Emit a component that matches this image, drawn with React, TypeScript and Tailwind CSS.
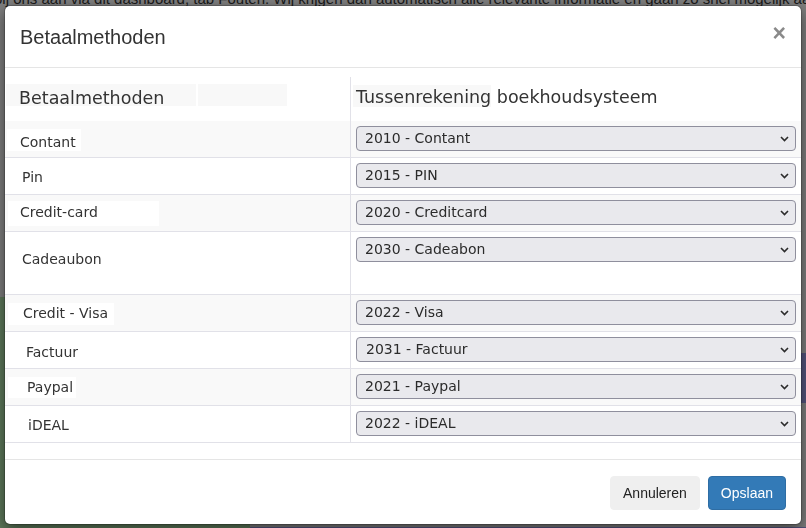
import React from 'react';

type Row = {
  name: string;
  account: string;
  striped: boolean;
  height: string;
  cell: string;
  label: string;
  select: string;
};

// label offsets/patches follow the original page (labels had white backgrounds pasted behind them)
const rows: Row[] = [
  {
    name: 'Contant',
    account: '2010 - Contant',
    striped: true,
    height: 'h-[37px]',
    cell: 'pt-[8px] pl-[2px]',
    label: 'w-[74px] h-[22px] bg-white pl-[13px] leading-[27px]',
    select: 'pl-[8px]',
  },
  {
    name: 'Pin',
    account: '2015 - PIN',
    striped: false,
    height: 'h-[37px]',
    cell: 'pt-[9px]',
    label: 'pl-[17px] leading-[20px]',
    select: 'pl-[8px]',
  },
  {
    name: 'Credit-card',
    account: '2020 - Creditcard',
    striped: true,
    height: 'h-[37px]',
    cell: 'pt-[6px] pl-[3px]',
    label: 'w-[151px] h-[25px] bg-white pl-[12px] leading-[22px]',
    select: 'pl-[8px]',
  },
  {
    name: 'Cadeaubon',
    account: '2030 - Cadeabon',
    striped: false,
    height: 'h-[63px]',
    cell: 'pt-[17px]',
    label: 'pl-[17px] leading-[20px]',
    select: 'pl-[8px]',
  },
  {
    name: 'Credit - Visa',
    account: '2022 - Visa',
    striped: true,
    height: 'h-[37px]',
    cell: 'pt-[8px] pl-[3px]',
    label: 'w-[106px] h-[22px] bg-white pl-[15px] leading-[21px]',
    select: 'pl-[8px]',
  },
  {
    name: 'Factuur',
    account: '2031 - Factuur',
    striped: false,
    height: 'h-[37px]',
    cell: 'pt-[10px]',
    label: 'pl-[21px] leading-[20px]',
    select: 'pl-[9px]',
  },
  {
    name: 'Paypal',
    account: '2021 - Paypal',
    striped: true,
    height: 'h-[37px]',
    cell: 'pt-[8px] pl-[3px]',
    label: 'w-[68px] h-[21px] bg-white pl-[19px] leading-[20px]',
    select: 'pl-[8px]',
  },
  {
    name: 'iDEAL',
    account: '2022 - iDEAL',
    striped: false,
    height: 'h-[37px]',
    cell: 'pt-[9px]',
    label: 'pl-[23px] leading-[20px]',
    select: 'pl-[8px]',
  },
];

const Chevron = () => (
  <svg width="9" height="6" viewBox="0 0 9 6" className="pointer-events-none absolute right-[7px] top-1/2 -translate-y-1/2">
    <polyline points="1,1 4.5,4.5 8,1" fill="none" stroke="#2b2b2b" strokeWidth="1.6" />
  </svg>
);

const AccountSelect: React.FC<{ value: string; pad: string }> = ({ value, pad }) => (
  <div className="relative ml-[5px] mt-[5px] w-[440px]">
    <select
      defaultValue={value}
      className={`block h-[25px] w-full appearance-none rounded-[4px] border border-[#8f8f9d] bg-[#e9e9ed] ${pad} pr-6 text-[14px] leading-[23px] text-[#2b2b2b]`}
    >
      <option>{value}</option>
    </select>
    <Chevron />
  </div>
);

const App: React.FC = () => {
  return (
    <div className="relative h-[528px] w-[806px] overflow-hidden bg-[#808080] font-['Liberation_Sans',Arial,sans-serif] text-[#1a1a1a]">
      {/* page behind the dialog */}
      <p className="-ml-[6px] -mt-[10px] whitespace-nowrap text-[15px] leading-[18px]">
        bij ons aan via dit dashboard, tab Fouten. Wij krijgen dan automatisch alle relevante informatie en gaan zo snel mogelijk aan de slag.
      </p>
      <div className="mt-[289px] flex h-[240px]">
        <div className="w-[250px] bg-[#5f7b5c]" />
        <div className="flex flex-1 flex-col">
          <div className="ml-auto mt-[56px] h-[50px] w-[60px] bg-[#55557f]" />
          <div className="flex-1" />
          <div className="h-[10px] bg-[#55557f]" />
        </div>
      </div>

      {/* dialog */}
      <div className="fixed inset-0 pl-[4px] pt-[5px]">
        <div className="flex h-[520px] w-[798px] flex-col rounded-[6px] border border-black/20 bg-white bg-clip-padding shadow-[0_5px_15px_rgba(0,0,0,0.5)]">
          <div className="flex items-start justify-between border-b border-[#e5e5e5] px-[15px]">
            <h4 className="pb-[16px] pt-[17px] text-[20px] leading-[28px] text-[#333]">Betaalmethoden</h4>
            <button className="mt-[16px] text-[23px] font-bold leading-none text-[#8a8a8a]">×</button>
          </div>

          <div className="pb-[16px] pt-[9px] font-['DejaVu_Sans',Verdana,sans-serif] text-[14px] text-[#333]">
            <div className="grid h-[44px] grid-cols-[346px_1fr]">
              <div className="flex border-r border-[#e1e1e8] pl-[1px] pt-[7px] text-[17.5px]">
                <span className="h-[22px] w-[190px] bg-[#f8f8f8] pl-[13px] leading-[28px]">Betaalmethoden</span>
                <span className="ml-[2px] h-[22px] w-[89px] bg-[#f8f8f8]" />
              </div>
              <div className="flex items-start pl-[2px] pt-[8px] text-[17.5px]">
                <span className="h-[22px] bg-[#f8f8f8] pl-[3px] leading-[24px]">Tussenrekening</span>
                <span className="whitespace-pre leading-[24px]"> boekhoudsysteem</span>
              </div>
            </div>

            {rows.map((row) => (
              <div
                key={row.name}
                className={`grid grid-cols-[346px_1fr] border-b border-[#e1e1e8] ${row.height} ${row.striped ? 'bg-[#f9f9f9]' : 'bg-white'}`}
              >
                <div className={`flex items-start border-r border-[#e1e1e8] ${row.cell}`}>
                  <span className={`block whitespace-nowrap ${row.label}`}>{row.name}</span>
                </div>
                <div>
                  <AccountSelect value={row.account} pad={row.select} />
                </div>
              </div>
            ))}
          </div>

          <div className="flex justify-end gap-2 border-t border-[#e5e5e5] pb-[14px] pr-[15px] pt-[16px] text-[14px] leading-[20px]">
            <button className="rounded-[4px] border border-[#efefef] bg-[#efefef] px-3 py-[6px] text-[#222]">Annuleren</button>
            <button className="rounded-[4px] border border-[#2e6da4] bg-[#337ab7] px-3 py-[6px] text-white">Opslaan</button>
          </div>
        </div>
      </div>
    </div>
  );
};

export default App;
